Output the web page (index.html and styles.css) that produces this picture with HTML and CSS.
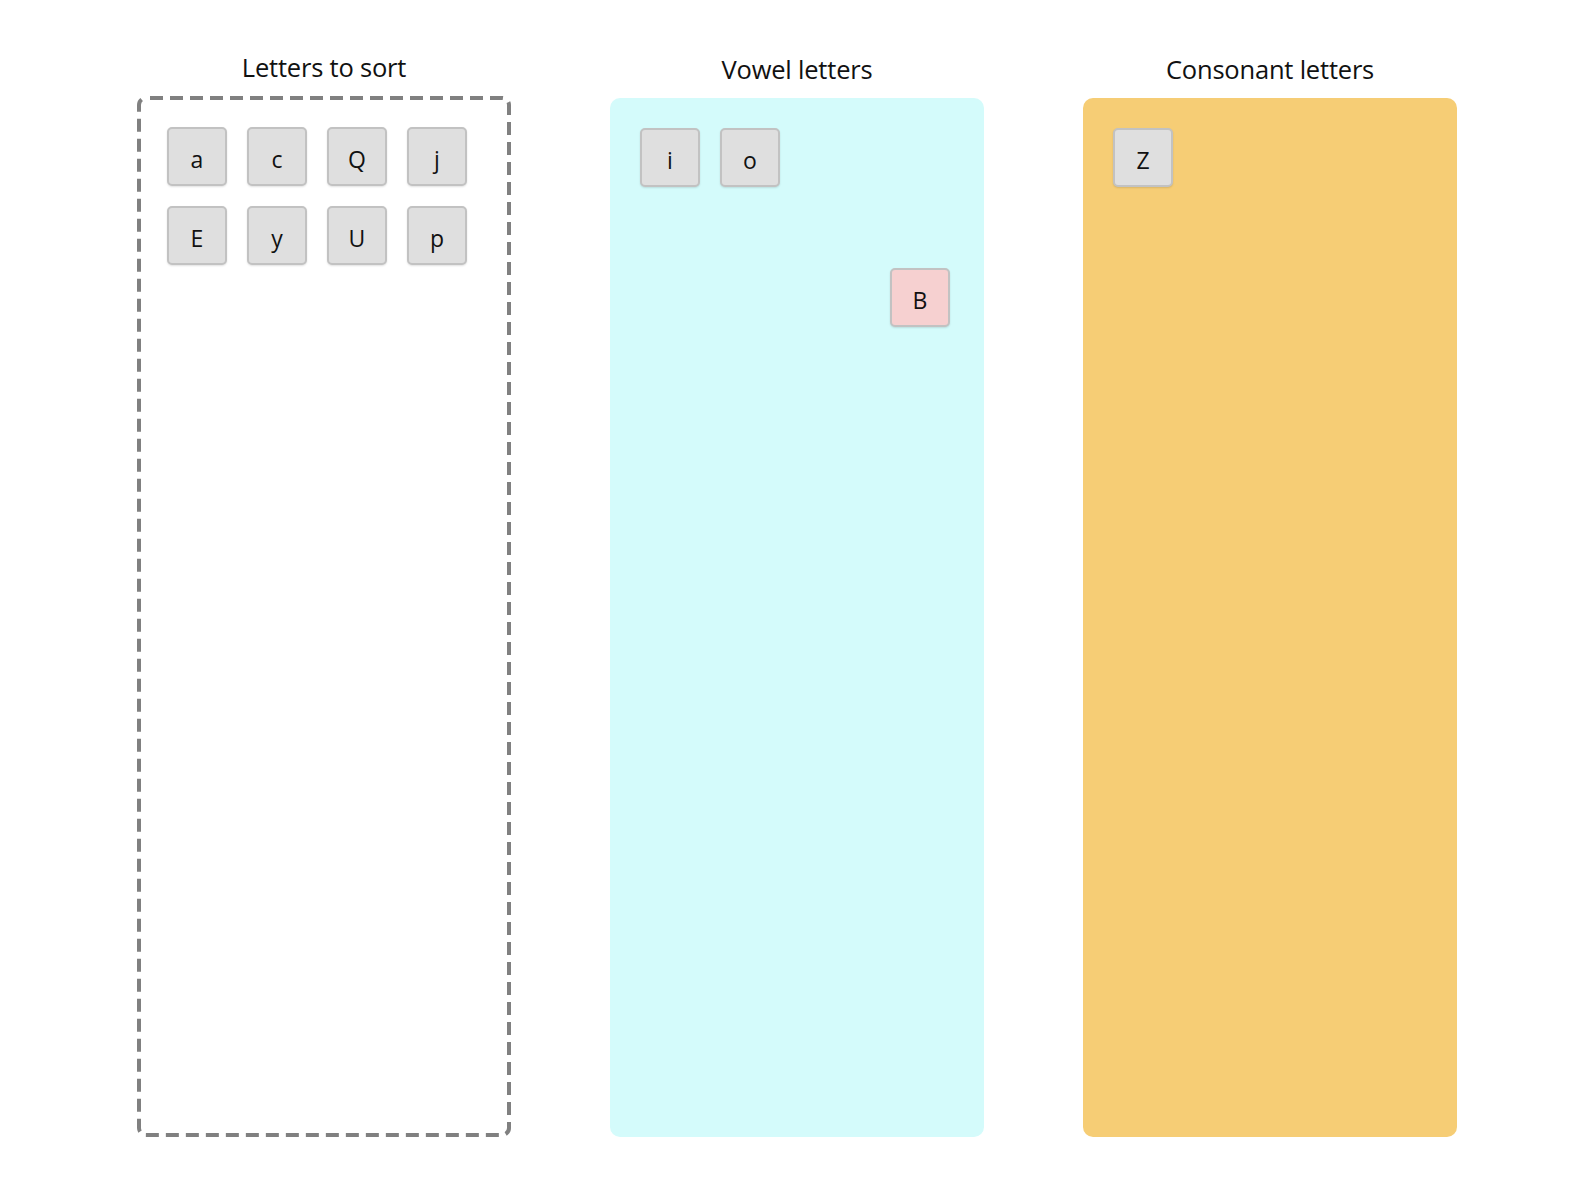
FILE: index.html
```html
<!DOCTYPE html>
<html lang="en">
<head>
<meta charset="utf-8">
<title>Sort the letters</title>
<link rel="stylesheet" href="styles.css">
</head>
<body>
<main class="board">
  <section class="column">
    <h2 class="title title-source">Letters to sort</h2>
    <div class="bin bin-source">
      <svg class="dash-frame" width="374" height="1041" viewBox="0 0 374 1041" aria-hidden="true">
        <rect x="2" y="2" width="370" height="1037" rx="7" ry="7" fill="none" stroke="#808080" stroke-width="4" stroke-dasharray="13 7" stroke-dashoffset="-4"></rect>
      </svg>
      <div class="tile">a</div>
      <div class="tile">c</div>
      <div class="tile">Q</div>
      <div class="tile">j</div>
      <div class="tile">E</div>
      <div class="tile">y</div>
      <div class="tile">U</div>
      <div class="tile">p</div>
    </div>
  </section>
  <section class="column">
    <h2 class="title">Vowel letters</h2>
    <div class="bin bin-vowel">
      <div class="tile">i</div>
      <div class="tile">o</div>
      <div class="tile tile-wrong tile-dragged">B</div>
    </div>
  </section>
  <section class="column">
    <h2 class="title">Consonant letters</h2>
    <div class="bin bin-consonant">
      <div class="tile">Z</div>
    </div>
  </section>
</main>
</body>
</html>
```
FILE: styles.css
```css
html, body {
  margin: 0;
  padding: 0;
  background: #ffffff;
}

body {
  font-family: "Open Sans", "Noto Sans", sans-serif;
  color: #111111;
}

.board {
  display: flex;
  justify-content: center;
  gap: 99px;
  padding-top: 46px;
}

.column {
  width: 374px;
  display: flex;
  flex-direction: column;
}

.title {
  box-sizing: border-box;
  margin: 0;
  height: 52px;
  padding-top: 6px;
  font-size: 25.5px;
  font-weight: 400;
  line-height: 34px;
  text-align: center;
  letter-spacing: -0.2px;
}

.title-source {
  height: 50px;
  padding-top: 4px;
}

.bin {
  box-sizing: border-box;
  position: relative;
  display: flex;
  flex-wrap: wrap;
  align-content: flex-start;
  border-radius: 10px;
  padding: 20px;
  height: 1039px;
}

.bin-source {
  height: 1041px;
  border-radius: 8px;
  padding: 21px 20px 20px 20px;
}

.dash-frame {
  position: absolute;
  left: 0;
  top: 0;
  pointer-events: none;
}

.bin-vowel {
  background: #d4fbfb;
}

.bin-consonant {
  background: #f6cd75;
}

.tile {
  box-sizing: border-box;
  width: 60px;
  height: 59px;
  margin: 10px;
  display: flex;
  align-items: center;
  justify-content: center;
  padding-top: 4px;
  background: #dfdfdf;
  border: 2px solid #c2c2c2;
  border-radius: 5px;
  box-shadow: 0 1px 2px rgba(0, 0, 0, 0.12);
  font-size: 23px;
  color: #111111;
}

.tile-wrong {
  background: #f6d0d0;
}

.tile-dragged {
  position: absolute;
  left: 270px;
  top: 160px;
}
```
